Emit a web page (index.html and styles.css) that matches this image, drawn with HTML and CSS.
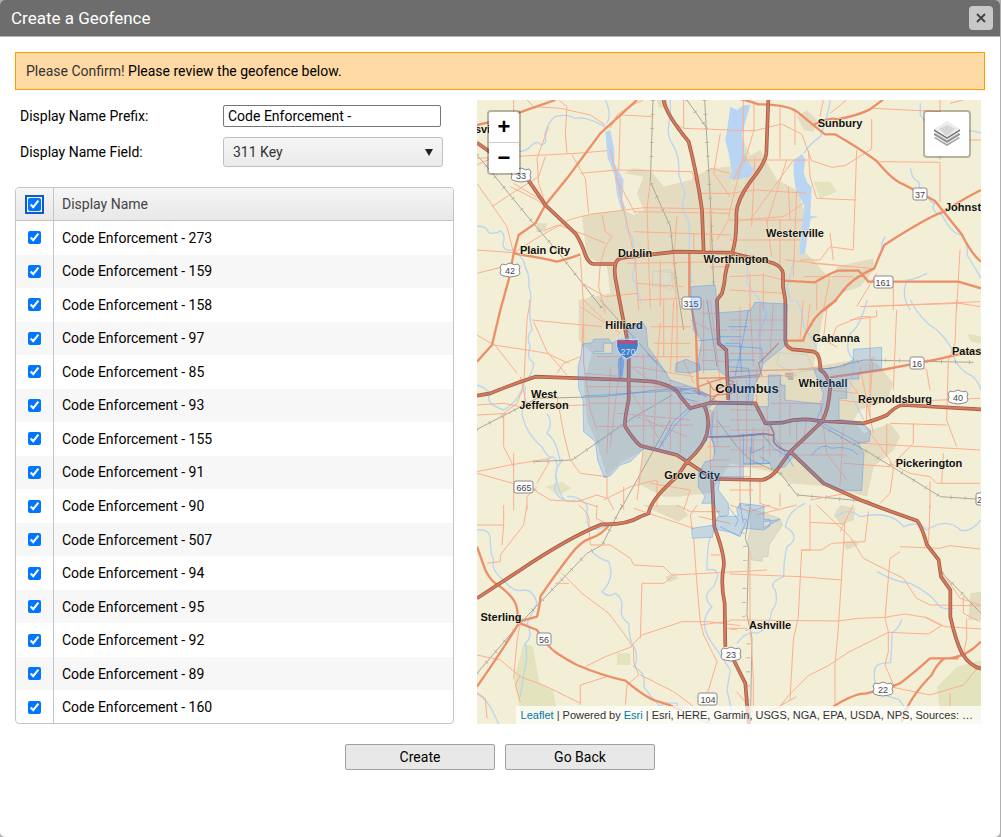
FILE: index.html
```html
<!DOCTYPE html>
<html lang="en">
<head>
    <meta charset="UTF-8">
    <meta name="viewport" content="width=device-width, initial-scale=1.0">
    <title>Create a Geofence</title>
    <link rel="stylesheet" href="styles.css">
</head>
<body>
    <div class="dialog">
        <header class="dialog-header">
            <h1>Create a Geofence</h1>
            <button type="button" class="close" aria-label="Close">
                <svg width="12" height="12" viewBox="0 0 12 12"><path d="M2 2l8 8M10 2l-8 8"/></svg>
            </button>
        </header>

        <form class="dialog-body">
            <p class="message"><span>Please Confirm!</span> Please review the geofence below.</p>

            <div class="columns">
                <div class="settings">
                    <div class="field">
                        <label for="prefix">Display Name Prefix:</label>
                        <input type="text" id="prefix" value="Code Enforcement - ">
                    </div>
                    <div class="field">
                        <label for="nameField">Display Name Field:</label>
                        <span class="select-wrap">
                            <select id="nameField"><option>311 Key</option></select>
                        </span>
                    </div>

                    <div class="grid">
                        <table>
                            <thead>
                                <tr><th class="check"><input type="checkbox" aria-label="Select all" checked></th><th>Display Name</th></tr>
                            </thead>
                            <tbody>
                                <tr><td class="check"><input type="checkbox" id="c1" checked></td><td><label for="c1">Code Enforcement - 273</label></td></tr>
                                <tr><td class="check"><input type="checkbox" id="c2" checked></td><td><label for="c2">Code Enforcement - 159</label></td></tr>
                                <tr><td class="check"><input type="checkbox" id="c3" checked></td><td><label for="c3">Code Enforcement - 158</label></td></tr>
                                <tr><td class="check"><input type="checkbox" id="c4" checked></td><td><label for="c4">Code Enforcement - 97</label></td></tr>
                                <tr><td class="check"><input type="checkbox" id="c5" checked></td><td><label for="c5">Code Enforcement - 85</label></td></tr>
                                <tr><td class="check"><input type="checkbox" id="c6" checked></td><td><label for="c6">Code Enforcement - 93</label></td></tr>
                                <tr><td class="check"><input type="checkbox" id="c7" checked></td><td><label for="c7">Code Enforcement - 155</label></td></tr>
                                <tr><td class="check"><input type="checkbox" id="c8" checked></td><td><label for="c8">Code Enforcement - 91</label></td></tr>
                                <tr><td class="check"><input type="checkbox" id="c9" checked></td><td><label for="c9">Code Enforcement - 90</label></td></tr>
                                <tr><td class="check"><input type="checkbox" id="c10" checked></td><td><label for="c10">Code Enforcement - 507</label></td></tr>
                                <tr><td class="check"><input type="checkbox" id="c11" checked></td><td><label for="c11">Code Enforcement - 94</label></td></tr>
                                <tr><td class="check"><input type="checkbox" id="c12" checked></td><td><label for="c12">Code Enforcement - 95</label></td></tr>
                                <tr><td class="check"><input type="checkbox" id="c13" checked></td><td><label for="c13">Code Enforcement - 92</label></td></tr>
                                <tr><td class="check"><input type="checkbox" id="c14" checked></td><td><label for="c14">Code Enforcement - 89</label></td></tr>
                                <tr><td class="check"><input type="checkbox" id="c15" checked></td><td><label for="c15">Code Enforcement - 160</label></td></tr>
                            </tbody>
                        </table>
                    </div>
                </div>

                <div class="map">
                    <svg class="map-canvas" viewBox="0 0 504 624" preserveAspectRatio="xMinYMin slice">
                        <g transform="scale(.33333)">
                            <g class="urban">
                                <path d="M315 350L345 340 440 330 470 345 500 330 480 280 500 230 440 220 470 205 520 210 560 260 640 240 700 205 759 200 850 150 900 240 960 270 980 330 985 460 1010 480 1060 540 1080 500 1190 475 1190 510 1150 560 1090 580 1040 640 1020 740 1010 800 1130 780 1200 790 1250 850 1230 900 1150 930 1130 960 1160 1000 1240 970 1270 1010 1250 1050 1190 1100 1170 1190 1060 1160 940 1150 900 1120 760 1090 700 1180 600 1190 560 1190 480 1150 500 1050 430 1090 390 1130 360 1030 330 960 320 850 345 760 305 720 305 600 400 580 390 500 330 470Z"/>
                                <path d="M540 0L570 0 575 30 545 20ZM960 50l30-20 30 30-10 35-30-5zM1090 1215l45 10-5 35-40 15-20-30zM1100 1325l35-5 10 15-38 15zM565 1430l25-10 15 15-30 12zM1480 1480l32-5v85h-38zM180 370l30 0-5 25-28 0zM495 1215h110l30 30-30 20z"/>
                                <path class="park" d="M110 1740l30-110 28 10 20 110 40 20 15 80H135zM420 1660h40v35h-40zM1010 245l50 0 20 30-50 20zM1380 1760l60-60 72-20v180h-120zM1470 700l42 10v20l-30-5zM759 150l40-30 20 40-20 100-40-10zM205 1160l50-15 30 20-40 20z"/>
                                <path class="field" d="M528 513l60 5 0 50-15 0-5-7-42-3zM818 1225l90 30 8 20-40 60-3 35-18 0v14l-32-5-10-55 8-40zM905 758l85 6 20 45-60 10-50-25zM549 510h35l0 30-15 20-20-5z"/>
                                <path class="airport" d="M925 818h24v22h-16v-8h-8zM700 800"/>
                            </g>
                            <g class="water">
                                <path d="M385 95l15-5 12 60 0 40 28 50-4 60 10 25-12 8-14-50-8-60-20-50z"/>
                                <path d="M760 20l20 10 20-15 20 0-15 50-10 40 10 60 20 40 10-10-15 35-40 10-25-5 10-20-10-55-10-40 5-30z"/>
                                <path d="M950 180l25-18 10 15-5 40 10 30 14 15-4 85 25 3-24 6-10 60-8 45-15 5 4-70 10-80-15-25-12-30-5-40z"/>
                                <path class="lake" d="M424 775l12-5 6 15-6 55h-10l-4-40z"/>
                            </g>
                            <g class="river">
                                <path d="M120 155q30 0 45-20 15-15 28 0 20-5 10-30 10-40 30-55 40-10 60 5 30-5 60 10 25 10 35 20M390 70q15-30-5-70M440 330q15 30 5 50l20 30 12 60-10 60 20 60 5 20M580 0v50q-15 50 5 80 25 40 20 90 10 40 20 60-20 50 10 80 5 60 0 100l10 90M0 378q30 0 35 20 20 5 35-5 15 10 10 30-10 30 30 28 30 20 35 50 15 30 10 60 10 20 5 40l-5 0"/>
                                <path d="M160 600q-5 50 5 90-20 20-5 50-15 30 10 50 0 30-30 60-10 50-60 80-60-20-40-50-20-20-40-25M210 940q20 30 0 60 30 20 40 90-20 20-10 50-20 40 20 60M145 860q0 40-10 80 10 60 60 100 20 40 30 30 25 10 10 60 10 40 20 60 10 20 40 10M270 1190q30-5 60 25v50q15 40 60 10"/>
                                <path d="M0 1290q40-5 40 30 0 40 10 60-10 30 30 60 30 40 60 30 30 0 40 40l-30 60q20 40-5 60 10 50-5 90l-10 70M0 1780q30 20 45 50l20 42M345 1355q20 20 50 30 20 50-20 90 20 20 40 5 20 10 20 40-10 30 20 50 0 50 20 80 10 30-5 50 40 20 30 60 20 30 50 60 10-15 50-10 0 20 30 10 20 40 70 50"/>
                                <path d="M700 1310q-10 30-10 100 50-10 20 50-40 30-5 60-30 30-20 70 10 30 35 60l40 60-10 60 20 90M985 1210q-50 20-60 70 50 30 5 60-10 40-10 90-50 20-25 40 10 40-10 60-10 60-45 70-30-10-60 30M1080 1250q30-30 70 0 90-20 130 30 40-20 70 10 60-40 100 0 30 10 62-30M1200 1415q50 30 100 35 60 30 80 60 10 20 50 15M1275 1558q-10 30-30 40 0 50-5 90-20 0-35 5-20 10-10 60 0 30 70 45 10 10 20 30"/>
                                <path d="M1060 0q-10 60-30 110-30 20-50 50M950 480q-10 50-20 80 10 60 20 40M1300 205q5 35 25 40 0 30 30 50 10 20 20 10-20 30 20 40 30 60 60 60 20 30 15 60 20 30 42 70M1225 410q-20 30-5 40M1350 520q-40 20-60 20-20 50 10 90M1330 10v35q40 60 120 55 30-15 62 0M1300 600q30 60 80 90 50 50 50 80 10 30 40 50 30 10 42 50M1170 600q-20 80-50 100-20 50 10 80l-5 60-10 30 45 90M960 600q20 40 20 80 30 40 40 70M805 450q10 60 5 100 40 50 60 90l-30 80"/>
                            </g>
                            <g class="rail">
                                <path d="M0 165L30 200 148 345 250 465 375 625M528 0L520 245 580 380 600 560 620 690M683 0L700 300 710 556M630 0l60 85M0 988L180 895 380 890 540 870 660 865M170 1085l115-5 180-125 120-70M436 1215L375 1335 330 1360 120 1580 0 1720M430 1230L580 960M370 600L540 790M759 815L1060 805 1160 780 1490 787M720 960l60 80 40 40 90 40 50 65 220 20M1020 970l160 90 210 130 120 8M820 1040l0 175-15 100 10 30-5 200 15 70-5 257M1395 1420l60 60 57 60M690 600l30 200"/>
                                <path class="ties" d="M0 165L30 200 148 345 250 465 375 625M528 0L520 245 580 380 600 560M683 0L700 300 710 556M630 0l60 85M0 988L180 895M170 1085l115-5 180-125M436 1215L375 1335 330 1360 120 1580 0 1720M1060 805L1160 780 1490 787M910 1120l50 65 220 20M1020 970l160 90 210 130 120 8M810 1215l-15 100 10 30-5 200 15 70-5 257M1395 1420l60 60 57 60"/>
                            </g>
                            <g class="minor">
                                <path d="M150 0l20 20 80 5 90 20 45 30M245 0l25 20-5 80 5 60M500 0q-50 20-80 45l-20 40M430 45L425 210M430 45l100 5M0 175L300 160 390 152M215 80L180 175 185 250 205 310M285 165l40 70 10 105M310 220l110-10 225 5 20 60M590 70l30 15 139 5M620 0v85M400 150l20 80 20 100 35 150 10 150M110 0v35M0 195l130-60M0 250l90 130 20 80M0 450l110 8 80-50 90-50 60-15 160-20 280 5M110 250l100 60M45 320l60-40 80-50 20-60M100 260l80 40 110 90 30 70M205 390l40-15 80 30 60 25M375 345l10 50 20 15-20 30-15 50-5 70 20 80M470 335l290 5M520 245l-10 80 10 300M470 395l290 10M450 490l309-5M600 350l-10 130 10 150M480 550l140 10M480 600l150-5M650 400l0 55M670 280h90M700 320v140M720 420l40-70M700 500h60M315 550l70 40 95-10M320 600l60 60 100 20M0 520l80-20M310 470l10 150-5 120M415 230l60 110M550 480v140M700 205l59 15M730 100l-20 120 49 70"/>
                                <path transform="translate(759 -300)" d="M40 300v180l-30 60M72 310l0 80-30 100M150 315v160M0 392h75l80-20 60 30 30 80 60 20 40-5 80-50 0-90M195 325l0 110M45 480h190M235 450l5 80 20 65 120 5M380 450l-10 300M270 350l10-50M300 340l50-40M430 325l200 10M630 300v40M450 485l180 2 0 120M0 580l80-10 150 10M0 660h220M40 470L-5 650M75 470l-10 210M190 480l-130 180M170 480l-60 190M30 660l130-10 60-40M110 660l15 110M150 660v140M175 560l5 100M200 570l-10 260M0 720h210M210 780h60l30-40 70 10M245 790l180 15M300 700l10 80M0 830l100-5 60 15M0 870l160 10M60 820v110M100 820v110M260 850v80M440 820l-60 100M300 830l-20 100M490 850v80M690 750l-10 180M490 830h-50M400 920l350-15M720 420h33M660 310l40-10M640 340l-10 140M165 780l200 20M220 830l150 0"/>
                                <path transform="translate(0 600)" d="M160 0l-10 60-10 200-20 50-40 30 0 100 30 60M0 105l50 30 100 15 60 10 65 30M165 60l100 10 110 10M170 65l40 90 60 70M50 130l70 90M240 220l20-30 50-20M130 230l20 90M0 315l80-5 50 10 200-5M0 345l100-5M240 290l20 110 20 80 30 40 80 10 0 60 20 40M0 515l100-20 120-20M0 520l180 50M110 460l0 170M180 560l-30 30 0 40M220 480l-40 70M170 570l50 30 80 5 60-20 30 10M320 70l0 120 20 140 20 60M310 20l120 80M360 170h280M320 220l120 10M330 260l300 0M340 310l330 0M360 380l290-5M400 200l-10 260M430 180l-30 260M500 160v280M540 180l-10 260M580 240v210M610 280v180M480 350l150 60M460 270l100 170M500 440l-20 160M450 190l90 70 100 20M550 70l-10 120M560 0v170M590 0l-10 220M600 10v200M520 80h120M530 130h110M620 180l30 70M380 600l80-40 80-20M440 560l0 70M540 540v80M520 550l120 20-20 60M300 600l60 20M700 0l30 250M720 40h-50M640 60l60 30 50 0M660 150h90M670 180l90 5M680 0v220M700 330l0 200M720 330v110M690 380h70M690 440h70M700 480h60M470 200l180 30M420 340l220 20"/>
                                <path transform="translate(759 600)" d="M0 60h160M0 90h165M0 120h160M0 160h120M30 20v180M60 10l10 190M90 10v170M130 10l-10 150M0 210h180l100-10M0 235l200-10M0 265h110M80 200v120M20 240l5 160M50 240v240M110 320l10 150M120 310h150M150 240l0 120M180 310l0 100M0 330h90M0 360h100M0 390h120M0 420h130M0 450h160M30 400v100M70 380v110M100 380v110M150 370v100M200 360v70M230 350l-10 80M130 430l280 0M180 465h170M340 380l-10 180M340 490l140 10M400 370l80 110 10 30-10 70-30 30M220 0l-10 120M300 130l20-50 70-30h30l0 300M500 30l-10 240M390 20l300-10 60 10M440 30l0 20-80 10M680 0l-5 130-20 50-5 180 30 80M600 270l-10-60-50-30M350 235l60 80 0 60M330 300l80 10 340-15M550 370l0 60-60 60M480 370l170 5M400 430l350 20M480 490l60 30 60 10 20 20h130M600 545l0 80M240 10l-10 90M290 30l-10 90 40 20M640 460l-5 90M270 300l20 160 60 80M300 270l80 10M170 140l100 20M430 170l-10 120M390 200l40 200M470 370l0 100M240 600l110-20 60 30M-60 500h100l60 0M-50 530h110v60M30 500v120M90 540v70l60 20M150 580v40M0 570h70"/>
                                <path transform="translate(0 1215)" d="M80 0l0 60-80 0M80 60l-5 60M150 0l-10 60-70 90 0 20-40 5M305 0q40 30 30 60l5 60 60 0 60 40 10 20 90 5 25 25 200-10 85-5M585 215l-25 20-65 0-5 165M255 205l60 60 80 60 60 80 10 20-80 30-60 30M465 420l30-30 120-40h80l95 12M470 420v50l15 40-35 30-5 60M360 0l-2 40 40 20M470 10l180 60M645 70l-5-40 20-30M650 100l10 140 10 110 10 40 40 80-30 100M0 450l70 15 60 50 80 30 100 50M110 520l10-110 10-60M310 600v-60l80-25M490 510l40 20 60 30 80 60M130 510l-15 30 15 50M30 640l-5-60-30-20M665 35l95 20M730 150l-30 0M750 370l30 5M670 360l90-12M600 0l40 20 90 0M235 235h40"/>
                                <path transform="translate(759 1215)" d="M240 0v135h-25l-10 200-15 70-10 180M345 50L325 370 315 480 315 600M240 52l100 5M260 0l100 95 40 65 60 30 60 30 40 60 40 20 170 3M215 135h60l30-20 100-5 10-90M0 207l210 8 125 10M0 345l325 3 60-8 80-3M465 337l60-10 60 10 50 25-40 25-120-5-120 60-60 40-60 30-60 60-30 40M510 140l-30 20-15 180 10 40 0 60-10 40 30 70M600 0l-5 130M510 125l120 5 30-8 90 10M585 335l60 30 110 7M370 0l-40 80M630 190l60 90 60 20M700 275v50l50 25M710 340v60l-10 50M480 545l120 25 100-30 50-60M660 565v40M60 140l0 200 10 180 0 90M0 0l60 20 60-20M80 30l120-30M0 370h50M20 560l50 60M110 625l90-50"/>
                            </g>
                            <g class="major">
                                <path d="M0 75l45-10M120 40L235 0M480 0L370 100 270 235 205 315 175 370 125 405 110 460 95 540 70 630 45 735 0 785M110 460q90 15 130 25 40-10 70-22M637 455l0 130 20 110 5 160 5 30"/>
                                <path transform="translate(759 -300)" d="M0 290q50 10 85 23 90 0 120 25 60 50 80 65h30q70 40 125 80 50 60 80 70 60 30 95 50 40 50 80 100 30 60 58 82M250 375q50-25 70-17 60-10 100-30l40-30M753 570q-60 30-110 65-40 10-180 100-10 20-30 70-70 30-100 75-30 40-60 55M160 842l95 5q50-30 70-35h60q20 20 30 33h270l68 20"/>
                                <path transform="translate(759 600)" d="M320 0q-60 40-75 70-25 40-25 52h-55M300 232L455 210 620 178 753 148"/>
                                <path transform="translate(0 1215)" d="M0 125l25 70q15 30 30 40 60 40 65 75l5 40 55-15q10-40 10-60 40-60 90-125 30-40 60-50 35-10 60-45M125 355Q80 430 0 545M130 355l50 20q30 50 60 70 30 20 60 35 70 30 145 47 60 50 90 60 40 10 80 30"/>
                                <path transform="translate(759 1215)" d="M310 605q60-40 100-40 80-20 100-30 40-30 90-75h60q50-5 93-50M515 650q20-70 90-140 20-40 40-50h40"/>
                                <path class="downtown" d="M665 860l40-15 35-10 30 10-5 35-45 5-20 20M650 870l60 20 50-30M690 840l20 30 60-20M700 850v60M665 835l95-3 90-8M855 830l-10-40 60-60"/>
                            </g>
                            <g class="freeway">
                                <path id="fw" d="M0 128L150 235Q175 270 205 315L295 400Q315 430 325 465 335 490 350 492H415M415 492Q420 475 440 473L600 455 759 458M415 492Q410 520 418 550L435 640 455 740V900Q440 970 445 980 470 1020 490 1037L600 1065 705 1135M720 1137L855 1140Q880 1135 900 1110L940 1055 1035 965Q1055 930 1060 860 1050 820 1030 810 1030 760 1010 755 980 750 945 748 925 740 925 720V600L918 560V520Q915 500 890 490L759 458M560 0Q565 40 635 125 660 220 675 330L680 455M874 0L868 160Q865 190 820 245 780 300 778 340 780 420 765 460 745 500 742 550L735 580 720 600 725 730 748 750 754 900M0 887L40 880Q100 855 175 830L455 840 530 845Q600 860 610 890L640 925 700 908 835 910 865 970 915 968Q970 952 1020 962L1160 970Q1210 955 1230 945 1260 915 1280 915L1512 928M680 915Q700 950 690 1000 680 1040 630 1085L600 1130Q520 1200 515 1240L490 1250Q450 1275 375 1273 280 1310 130 1410L0 1495M705 1135L712 1280Q745 1370 740 1400 730 1450 743 1510L745 1640M770 1680L805 1750 815 1872M940 1055L1040 1150 1150 1200 1215 1225 1320 1262Q1335 1280 1350 1335L1385 1380 1392 1430 1420 1470V1550Q1435 1620 1455 1660 1480 1700 1512 1706"/>
                                <use href="#fw" class="freeway-fill"/>
                                <path class="branch" d="M875 970q20 30 15 40v15q15 25 50 30M690 1011l90-2 80-8 30 5"/>
                            </g>
                        </g>

                        <g class="places">
                            <text x="-2" y="33" class="from">svi</text>
                            <text x="363" y="27">Sunbury</text>
                            <text x="468" y="111" class="from">Johnst</text>
                            <text x="318" y="137">Westerville</text>
                            <text x="259" y="163">Worthington</text>
                            <text x="158" y="157">Dublin</text>
                            <text x="68" y="154">Plain City</text>
                            <text x="147" y="229">Hilliard</text>
                            <text x="359" y="242">Gahanna</text>
                            <text x="475" y="255" class="from">Patas</text>
                            <text x="346" y="287">Whitehall</text>
                            <text x="418" y="303">Reynoldsburg</text>
                            <text x="270" y="293" class="city">Columbus</text>
                            <text x="67" y="298">West</text>
                            <text x="67" y="309">Jefferson</text>
                            <text x="215" y="379">Grove City</text>
                            <text x="452" y="367">Pickerington</text>
                            <text x="24" y="521">Sterling</text>
                            <text x="293" y="529">Ashville</text>
                        </g>

                        <g class="shields">
                            <rect x="436" y="88" width="14" height="12" rx="2"/><text x="443" y="98">37</text>
                            <rect x="397" y="176" width="19" height="12" rx="2"/><text x="406" y="186">161</text>
                            <rect x="205" y="197" width="19" height="12" rx="2"/><text x="214" y="207">315</text>
                            <rect x="433" y="257" width="14" height="12" rx="2"/><text x="440" y="267">16</text>
                            <rect x="37" y="381" width="19" height="12" rx="2"/><text x="47" y="391">665</text>
                            <rect x="60" y="533" width="14" height="12" rx="2"/><text x="67" y="543">56</text>
                            <rect x="221" y="593" width="19" height="12" rx="2"/><text x="231" y="603">104</text>
                            <rect x="499" y="393" width="14" height="12" rx="2"/><text x="500" y="403" class="from">2</text>
                            <path d="M36 69q3 2 8-1 5 3 8 1l2 3q-2 3 0 6-1 3-4 3l-6 1-6-1q-3 0-4-3 2-3 0-6z"/><text x="44" y="79">33</text>
                            <path d="M25 164q3 2 8-1 5 3 8 1l2 3q-2 3 0 6-1 3-4 3l-6 1-6-1q-3 0-4-3 2-3 0-6z"/><text x="33" y="174">42</text>
                            <path d="M473 291q3 2 8-1 5 3 8 1l2 3q-2 3 0 6-1 3-4 3l-6 1-6-1q-3 0-4-3 2-3 0-6z"/><text x="481" y="301">40</text>
                            <path d="M246 548q3 2 8-1 5 3 8 1l2 3q-2 3 0 6-1 3-4 3l-6 1-6-1q-3 0-4-3 2-3 0-6z"/><text x="254" y="558">23</text>
                            <path d="M398 583q3 2 8-1 5 3 8 1l2 3q-2 3 0 6-1 3-4 3l-6 1-6-1q-3 0-4-3 2-3 0-6z"/><text x="406" y="593">22</text>
                            <path class="interstate" d="M140 239q5 2 10 0 6 2 11 0 3 14-11 20-13-6-10-20z"/>
                            <path class="interstate-top" d="M141 240q5 1 9 0 6 1 10 0v4h-20z"/>
                            <text x="151" y="255" class="interstate-no">270</text>
                        </g>

                        <g class="fences" transform="scale(.33333)">
                            <path d="M312 768L316 732 345 728 350 718 395 716 405 730 425 718 445 718 455 685 495 665 508 685 512 740 555 800 580 840 665 868 700 890 720 905 690 925 695 1000 690 1020 655 1055 628 1082 600 1062 500 1046 460 1085 430 1095 400 1127 382 1133 362 1080 355 1025 320 995 318 900 305 865 303 800ZM350 755h30v-25h25v30h-55z"/>
                            <g transform="translate(549 510)">
                                <path d="M92 50L165 45 175 128 240 124 272 120 285 97 382 102 378 225 310 280 298 320 285 340 275 410H325V315H362V345H375V390L485 402 490 370 462 300 545 290 580 270V238L665 232V298L597 310V327H560V385H537V448L600 458 632 480 628 515 595 520 612 550 605 662 540 660 480 635 400 560 375 590 335 598 330 580 250 585V625H180L175 660 205 700V735L180 740 160 700 125 700 135 680 115 650V610L135 575 160 570 165 530 150 500 155 430 175 400 205 395V325L172 298 118 300 115 270 125 212 100 180Z"/>
                                <path d="M95 775l68-10 10-25 62-2-5-20 10-18 72 8v40h18v20l-18 12-60-5-15 22-25-10-50-10-5 25-60 3ZM48 280l30-12 20 8 20 8v18l-30 8-42-5zM312 755l48-7-30 15-20 10z"/>
                                <path class="fence-line" d="M175 225l130 10 2 45M195 220h45l5 90M225 320l20-90 20-110M115 212l60-5M205 325l92-5M170 400l115-3M0 530l40-75 50-45M135 410l25 20-5 60 10 60M205 290l60 5 5 30-5 70M150 503l100-8 60 0 30 40 45 25M310 460l160-10 130 70M470 450l20-50M250 490v90l80 0M275 490v60l40-20M340 500l30 40 30 50M455 555q30-40 60-20 50-10 80 20M205 710l30 40-10 20M180 770l60 30 20-50M205 170h60M205 270h80M175 200h70M240 700l10 60M300 560l30 20M30 350l60 10 50 20M70 370l50 0 20 10"/>
                            </g>
                            <path class="fence-line" d="M318 888l312-18M430 840v-60l5-20M545 1045l50-70 50-50M510 760l60 60M610 865l10 30 40 10"/>
                        </g>
                    </svg>

                    <div class="zoom-control">
                        <button type="button" aria-label="Zoom in">+</button>
                        <button type="button" aria-label="Zoom out">−</button>
                    </div>
                    <button type="button" class="layers" aria-label="Layers">
                        <svg width="26" height="26" viewBox="0 0 26 26">
                            <path fill="#a2a2a2" d="M0 17l13-8 13 8-13 8z"/>
                            <path fill="#bdbdbd" d="M2 17l11-7 11 7-11 6z"/>
                            <path fill="#fff" d="M0 15l13 8 13-8v-2H0z"/>
                            <path fill="#8f8f8f" d="M0 13l13-8 13 8v1l-13 8-13-8z"/>
                            <path fill="#b4b4b4" d="M1 13l12-8 12 8-12 7z"/>
                            <path fill="#fff" d="M0 11l13 8 13-8V9H0z"/>
                            <path fill="#777" d="M0 8l13 8 13-8v2l-13 8-13-8z"/>
                            <path fill="#ececec" d="M0 8l13-8 13 8-13 8z"/>
                            <path fill="#d6d6d6" d="M5 8l8-4 8 4-8 7z"/>
                        </svg>
                    </button>
                    <div class="attribution"><a href="#">Leaflet</a> | Powered by <a href="#">Esri</a> | Esri, HERE, Garmin, USGS, NGA, EPA, USDA, NPS, Sources: …</div>
                </div>
            </div>

            <div class="actions">
                <button type="submit">Create</button>
                <button type="button">Go Back</button>
            </div>
        </form>
    </div>
</body>
</html>
```

FILE: styles.css
```css
* {
    box-sizing: border-box;
}
body {
    margin: 0;
    background-color: #b0b0b0;
    font-family: Roboto, sans-serif;
    font-size: 14px;
    line-height: 20px;
    color: #000;
}
input, select, button {
    font: inherit;
    color: inherit;
    margin: 0;
}
.dialog {
    min-height: 100vh;
    margin-right: 1px;
    background-color: #fff;
    border-radius: 5px;
    overflow: hidden;
}
.dialog-header {
    display: flex;
    align-items: center;
    justify-content: space-between;
    height: 37px;
    padding: 0 7px 0 11px;
    background-color: #6d6d6d;
    border-bottom: 1px solid #b4b4b4;
    color: #fff;
}
.dialog-header h1 {
    margin: 0;
    font-size: 17px;
    font-weight: 400;
}
.close {
    display: flex;
    align-items: center;
    justify-content: center;
    width: 24px;
    height: 24px;
    padding: 0;
    border: none;
    border-radius: 4px;
    background-color: #c8c8c8;
    cursor: pointer;
}
.close path {
    stroke: #444;
    stroke-width: 2;
    fill: none;
}
.dialog-body {
    padding: 15px;
}
.message {
    margin: 0 0 10px;
    padding: 8px 10px;
    border: 1px solid #ff9c00;
    background-color: #ffdaa5;
}
.message span {
    color: #333;
}
.columns {
    display: flex;
    gap: 23px;
    padding-right: 4px;
}
.settings {
    flex: 0 0 439px;
    display: flex;
    flex-direction: column;
}
.field {
    display: flex;
    align-items: center;
    padding-left: 5px;
}
.field label {
    width: 203px;
}
.field input {
    width: 218px;
    height: 22px;
    padding: 1px 4px;
    border: 1px solid #767676;
    border-radius: 2px;
}
.field:first-child {
    padding-top: 5px;
    margin-bottom: 10px;
}
.select-wrap {
    position: relative;
}
.select-wrap::after {
    content: "";
    position: absolute;
    right: 10px;
    top: 12px;
    border: 4px solid transparent;
    border-top: 7px solid #222;
    border-bottom: none;
    pointer-events: none;
}
.select-wrap select {
    display: block;
    width: 220px;
    height: 30px;
    padding: 0 9px;
    appearance: none;
    border: 1px solid #c0c0c0;
    border-radius: 3px;
    background: linear-gradient(#f5f5f5, #ebebeb);
    color: #333;
}
.grid {
    flex: 1 1 0;
    margin-top: 20px;
    border: 1px solid #c5c5c5;
    border-radius: 4px;
    overflow: hidden;
}
.grid table {
    width: 100%;
    height: 536px;
    border-collapse: separate;
    border-spacing: 0;
}
.grid th {
    height: 33px;
    padding: 0 8px;
    text-align: left;
    font-weight: 400;
    color: #444;
    background: linear-gradient(#f6f6f6, #e9e7e8);
    border-bottom: 1px solid #c5c5c5;
}
.grid td {
    padding: 0 8px;
}
.grid .check {
    width: 38px;
    padding: 0 0 0 12px;
    border-right: 1px solid #c5c5c5;
}
.grid tbody tr:nth-child(even) {
    background-color: #f7f7f7;
}
.grid input {
    display: block;
    width: 13px;
    height: 13px;
    accent-color: #0075ff;
}
.grid th input {
    outline: 2px solid #0a5ccb;
    outline-offset: 1px;
}
.map {
    position: relative;
    flex: 1;
    min-width: 0;
    height: 624px;
    overflow: hidden;
    background-color: #f2efd6;
}
.map-canvas {
    display: block;
    width: 100%;
    height: 100%;
}
.urban path {
    fill: #e3dcc0;
}
.urban .park {
    fill: #e3e4be;
}
.urban .field {
    fill: #dfddca;
    stroke: #ccc8b4;
    stroke-width: 2;
}
.urban .airport {
    fill: #b5b3a6;
}
.water path {
    fill: #b9d5f3;
}
.water .lake {
    fill: #8fb0d0;
}
.river path {
    fill: none;
    stroke: #b9d5f3;
    stroke-width: 4;
}
.rail path {
    fill: none;
    stroke: #aaa79a;
    stroke-width: 3;
}
.rail .ties {
    stroke-width: 12;
    stroke-dasharray: 2 40;
}
.minor path {
    fill: none;
    stroke: #fcae8f;
    stroke-width: 3;
    stroke-linejoin: round;
}
.major path {
    fill: none;
    stroke: #ec8f68;
    stroke-width: 7;
    stroke-linejoin: round;
}
.major .downtown {
    stroke-width: 4;
}
.freeway {
    fill: none;
    stroke: #a65a45;
    stroke-width: 11;
    stroke-linejoin: round;
}
.freeway-fill {
    stroke: #d67c5e;
    stroke-width: 6;
}
.freeway .branch {
    stroke: #c07868;
    stroke-width: 5;
}
.places text {
    font: bold 11px "Liberation Sans", Arial, sans-serif;
    text-anchor: middle;
    fill: #111;
    stroke: #f5f1da;
    stroke-width: 1;
    paint-order: stroke;
}
.places .from {
    text-anchor: start;
}
.places .city {
    font-size: 13px;
}
.shields rect, .shields path {
    fill: #fff;
    stroke: #8a8a8a;
    stroke-width: 1;
}
.shields text {
    font: 9px "Liberation Sans", Arial, sans-serif;
    text-anchor: middle;
    fill: #444;
}
.shields .from {
    text-anchor: start;
}
.shields .interstate {
    fill: #4a7fb8;
    stroke: #fff;
}
.shields .interstate-top {
    fill: #d8405c;
    stroke: none;
}
.shields .interstate-no {
    fill: #fff;
}
.fences path {
    fill: #3388ff;
    fill-opacity: .23;
    fill-rule: evenodd;
    stroke: #3388ff;
    stroke-opacity: .35;
    stroke-width: 3;
}
.fences .fence-line {
    fill: none;
    stroke-opacity: .45;
}
.zoom-control, .layers {
    position: absolute;
    top: 10px;
    border: 2px solid rgba(0, 0, 0, .25);
    border-radius: 4px;
    background-color: #fff;
    background-clip: padding-box;
}
.zoom-control {
    left: 10px;
}
.zoom-control button {
    display: block;
    width: 30px;
    height: 30px;
    padding: 0;
    border: none;
    background: none;
    font: bold 22px/30px "Liberation Sans", Arial, sans-serif;
    cursor: pointer;
}
.zoom-control button + button {
    height: 31px;
    border-top: 1px solid #ccc;
}
.layers {
    right: 10px;
    display: flex;
    align-items: center;
    justify-content: center;
    width: 48px;
    height: 48px;
    padding: 0;
    cursor: pointer;
}
.attribution {
    position: absolute;
    right: 0;
    bottom: 0;
    max-width: 100%;
    padding: 0 8px 0 5px;
    background-color: rgba(255, 255, 255, .7);
    font: 11px/18px "Liberation Sans", Arial, sans-serif;
    color: #333;
    white-space: nowrap;
}
.attribution a {
    color: #0078a8;
    text-decoration: none;
}
.actions {
    display: flex;
    justify-content: center;
    gap: 10px;
    margin-top: 20px;
}
.actions button {
    width: 150px;
    height: 26px;
    padding: 0;
    border: 1px solid #a0a0a0;
    border-radius: 2px;
    background-color: #e8e8e8;
    cursor: pointer;
}
.actions button:hover {
    background-color: #ddd;
}
```
